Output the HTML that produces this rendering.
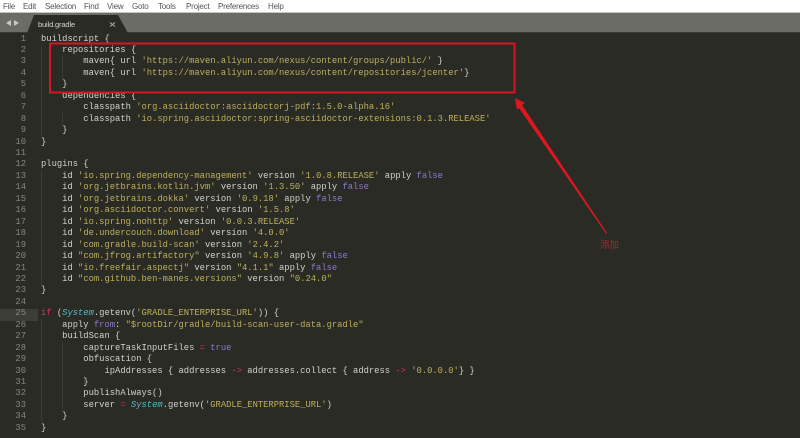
<!DOCTYPE html>
<html><head><meta charset="utf-8">
<style>
html,body{margin:0;padding:0;background:#2a2b25}
#r{position:relative;width:800px;height:438px;overflow:hidden;background:#2a2b25;font-family:"Liberation Mono",monospace;filter:blur(.35px)}
#menu{position:absolute;left:0;top:0;width:800px;height:12px;background:#fff;border-bottom:1px solid #c4c4c4}
#menu span{position:absolute;top:1px;font:8px/11px "Liberation Sans",sans-serif;color:#555;letter-spacing:-.2px}
#bar{position:absolute;left:0;top:13px;width:800px;height:20px;background:#6b6c66;border-bottom:1px solid #3a3b36;box-sizing:border-box}
.l{position:absolute;left:41px;height:11.45px;font-size:8.82px;line-height:11.45px;white-space:pre;color:#d2d2cc}
.n{position:absolute;left:0;width:26px;text-align:right;height:11.45px;font-size:8.82px;line-height:11.45px;color:#85867f}
.s{color:#bdb05c}.k{color:#d42e68}.p{color:#8f78cf}.c{color:#5ab8c8;font-style:italic}
.g{position:absolute;width:1px;background:#3b3c36}
</style></head><body><div id="r">
<div id="menu">
<span style="left:3px">File</span><span style="left:23px">Edit</span><span style="left:45px">Selection</span><span style="left:84px">Find</span><span style="left:107px">View</span><span style="left:132px">Goto</span><span style="left:158px">Tools</span><span style="left:186px">Project</span><span style="left:218px">Preferences</span><span style="left:268px">Help</span>
</div>
<div id="bar"></div>
<svg style="position:absolute;left:0;top:0" width="140" height="34">
<path d="M27 33 L34 15 L118 15 L128 33 Z" fill="#2a2b25"/>
<path d="M11 20 L6 23 L11 26 Z M14 20 L19 23 L14 26 Z" fill="#c8c8c4"/>
<path d="M110 22.5 L115 26.5 M115 22.5 L110 26.5" stroke="#b0b0aa" stroke-width="1"/>
</svg>
<div style="position:absolute;left:38px;top:19px;font:7.5px/11px 'Liberation Sans',sans-serif;color:#d4d4d0;letter-spacing:-.15px">build.gradle</div>
<div style="position:absolute;left:0;top:309px;width:38px;height:11.5px;background:#3c3d37"></div>
<div class="g" style="left:41px;top:45px;height:91px"></div>
<div class="g" style="left:62px;top:56px;height:23px"></div>
<div class="g" style="left:62px;top:113px;height:11px"></div>
<div class="g" style="left:41px;top:171px;height:114px"></div>
<div class="g" style="left:41px;top:319px;height:103px"></div>
<div class="g" style="left:62px;top:342px;height:68px"></div>
<div class="g" style="left:84px;top:376px;height:11px"></div>

<div class="n" style="top:33.5px">1</div><div class="l" style="top:33.5px">buildscript {</div>
<div class="n" style="top:44.95px">2</div><div class="l" style="top:44.95px">    repositories {</div>
<div class="n" style="top:56.4px">3</div><div class="l" style="top:56.4px">        maven{ url <span class="s">'https://maven.aliyun.com/nexus/content/groups/public/'</span> }</div>
<div class="n" style="top:67.85px">4</div><div class="l" style="top:67.85px">        maven{ url <span class="s">'https://maven.aliyun.com/nexus/content/repositories/jcenter'</span>}</div>
<div class="n" style="top:79.3px">5</div><div class="l" style="top:79.3px">    }</div>
<div class="n" style="top:90.75px">6</div><div class="l" style="top:90.75px">    dependencies {</div>
<div class="n" style="top:102.2px">7</div><div class="l" style="top:102.2px">        classpath <span class="s">'org.asciidoctor:asciidoctorj-pdf:1.5.0-alpha.16'</span></div>
<div class="n" style="top:113.65px">8</div><div class="l" style="top:113.65px">        classpath <span class="s">'io.spring.asciidoctor:spring-asciidoctor-extensions:0.1.3.RELEASE'</span></div>
<div class="n" style="top:125.1px">9</div><div class="l" style="top:125.1px">    }</div>
<div class="n" style="top:136.55px">10</div><div class="l" style="top:136.55px">}</div>
<div class="n" style="top:148px">11</div>
<div class="n" style="top:159.45px">12</div><div class="l" style="top:159.45px">plugins {</div>
<div class="n" style="top:170.9px">13</div><div class="l" style="top:170.9px">    id <span class="s">'io.spring.dependency-management'</span> version <span class="s">'1.0.8.RELEASE'</span> apply <span class="p">false</span></div>
<div class="n" style="top:182.35px">14</div><div class="l" style="top:182.35px">    id <span class="s">'org.jetbrains.kotlin.jvm'</span> version <span class="s">'1.3.50'</span> apply <span class="p">false</span></div>
<div class="n" style="top:193.8px">15</div><div class="l" style="top:193.8px">    id <span class="s">'org.jetbrains.dokka'</span> version <span class="s">'0.9.18'</span> apply <span class="p">false</span></div>
<div class="n" style="top:205.25px">16</div><div class="l" style="top:205.25px">    id <span class="s">'org.asciidoctor.convert'</span> version <span class="s">'1.5.8'</span></div>
<div class="n" style="top:216.7px">17</div><div class="l" style="top:216.7px">    id <span class="s">'io.spring.nohttp'</span> version <span class="s">'0.0.3.RELEASE'</span></div>
<div class="n" style="top:228.15px">18</div><div class="l" style="top:228.15px">    id <span class="s">'de.undercouch.download'</span> version <span class="s">'4.0.0'</span></div>
<div class="n" style="top:239.6px">19</div><div class="l" style="top:239.6px">    id <span class="s">'com.gradle.build-scan'</span> version <span class="s">'2.4.2'</span></div>
<div class="n" style="top:251.05px">20</div><div class="l" style="top:251.05px">    id <span class="s">"com.jfrog.artifactory"</span> version <span class="s">'4.9.8'</span> apply <span class="p">false</span></div>
<div class="n" style="top:262.5px">21</div><div class="l" style="top:262.5px">    id <span class="s">"io.freefair.aspectj"</span> version <span class="s">"4.1.1"</span> apply <span class="p">false</span></div>
<div class="n" style="top:273.95px">22</div><div class="l" style="top:273.95px">    id <span class="s">"com.github.ben-manes.versions"</span> version <span class="s">"0.24.0"</span></div>
<div class="n" style="top:285.4px">23</div><div class="l" style="top:285.4px">}</div>
<div class="n" style="top:296.85px">24</div>
<div class="n" style="top:308.3px">25</div><div class="l" style="top:308.3px"><span class="k">if</span> (<span class="c">System</span>.getenv(<span class="s">'GRADLE_ENTERPRISE_URL'</span>)) {</div>
<div class="n" style="top:319.75px">26</div><div class="l" style="top:319.75px">    apply <span class="p">from</span>: <span class="s">"$rootDir/gradle/build-scan-user-data.gradle"</span></div>
<div class="n" style="top:331.2px">27</div><div class="l" style="top:331.2px">    buildScan {</div>
<div class="n" style="top:342.65px">28</div><div class="l" style="top:342.65px">        captureTaskInputFiles <span class="k">=</span> <span class="p">true</span></div>
<div class="n" style="top:354.1px">29</div><div class="l" style="top:354.1px">        obfuscation {</div>
<div class="n" style="top:365.55px">30</div><div class="l" style="top:365.55px">            ipAddresses { addresses <span class="k">-&gt;</span> addresses.collect { address <span class="k">-&gt;</span> <span class="s">'0.0.0.0'</span>} }</div>
<div class="n" style="top:377px">31</div><div class="l" style="top:377px">        }</div>
<div class="n" style="top:388.45px">32</div><div class="l" style="top:388.45px">        publishAlways()</div>
<div class="n" style="top:399.9px">33</div><div class="l" style="top:399.9px">        server <span class="k">=</span> <span class="c">System</span>.getenv(<span class="s">'GRADLE_ENTERPRISE_URL'</span>)</div>
<div class="n" style="top:411.35px">34</div><div class="l" style="top:411.35px">    }</div>
<div class="n" style="top:422.8px">35</div><div class="l" style="top:422.8px">}</div>

<svg style="position:absolute;left:0;top:0" width="800" height="438">
<rect x="50" y="43.5" width="464.5" height="49" fill="none" stroke="#d8161f" stroke-width="2"/>
<path d="M515 98 L525 103 L522 105 L607 233 L606 233.5 L519 108 L517 110 Z" fill="#e0161f"/>
</svg>
<div style="position:absolute;left:600px;top:240px;font:9.5px/12px 'Liberation Sans','Noto Sans CJK SC',sans-serif;color:#a8282c">添加</div>
</div></body></html>
